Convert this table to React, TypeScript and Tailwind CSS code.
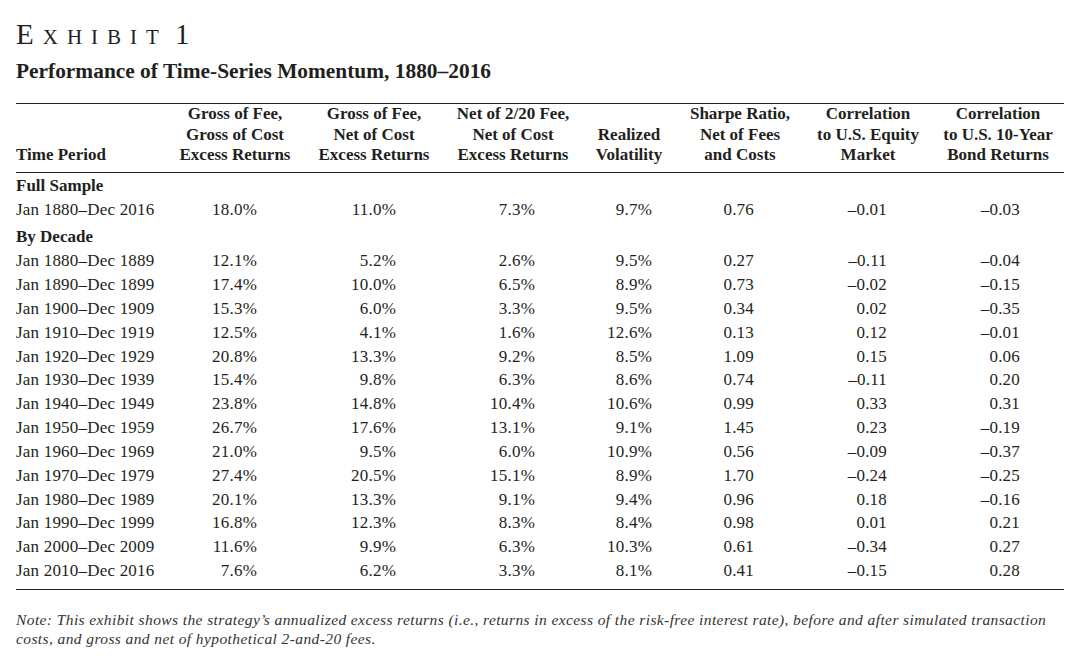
const cols = [
  { w: "w-[150px]", pr: "" },
  { w: "w-[138px]", pr: "pr-[47px]" },
  { w: "w-[140px]", pr: "pr-[48px]" },
  { w: "w-[138px]", pr: "pr-[47px]" },
  { w: "w-[94px]", pr: "pr-[24px]" },
  { w: "w-[128px]", pr: "pr-[50px]" },
  { w: "w-[128px]", pr: "pr-[45px]" },
  { w: "w-[132px]", pr: "pr-[44px]" },
];

const headers = [
  ["Time Period"],
  ["Gross of Fee,", "Gross of Cost", "Excess Returns"],
  ["Gross of Fee,", "Net of Cost", "Excess Returns"],
  ["Net of 2/20 Fee,", "Net of Cost", "Excess Returns"],
  ["Realized", "Volatility"],
  ["Sharpe Ratio,", "Net of Fees", "and Costs"],
  ["Correlation", "to U.S. Equity", "Market"],
  ["Correlation", "to U.S. 10-Year", "Bond Returns"],
];

const fullSample = ["Jan 1880–Dec 2016", "18.0%", "11.0%", "7.3%", "9.7%", "0.76", "–0.01", "–0.03"];

const decades = [
  ["Jan 1880–Dec 1889", "12.1%", "5.2%", "2.6%", "9.5%", "0.27", "–0.11", "–0.04"],
  ["Jan 1890–Dec 1899", "17.4%", "10.0%", "6.5%", "8.9%", "0.73", "–0.02", "–0.15"],
  ["Jan 1900–Dec 1909", "15.3%", "6.0%", "3.3%", "9.5%", "0.34", "0.02", "–0.35"],
  ["Jan 1910–Dec 1919", "12.5%", "4.1%", "1.6%", "12.6%", "0.13", "0.12", "–0.01"],
  ["Jan 1920–Dec 1929", "20.8%", "13.3%", "9.2%", "8.5%", "1.09", "0.15", "0.06"],
  ["Jan 1930–Dec 1939", "15.4%", "9.8%", "6.3%", "8.6%", "0.74", "–0.11", "0.20"],
  ["Jan 1940–Dec 1949", "23.8%", "14.8%", "10.4%", "10.6%", "0.99", "0.33", "0.31"],
  ["Jan 1950–Dec 1959", "26.7%", "17.6%", "13.1%", "9.1%", "1.45", "0.23", "–0.19"],
  ["Jan 1960–Dec 1969", "21.0%", "9.5%", "6.0%", "10.9%", "0.56", "–0.09", "–0.37"],
  ["Jan 1970–Dec 1979", "27.4%", "20.5%", "15.1%", "8.9%", "1.70", "–0.24", "–0.25"],
  ["Jan 1980–Dec 1989", "20.1%", "13.3%", "9.1%", "9.4%", "0.96", "0.18", "–0.16"],
  ["Jan 1990–Dec 1999", "16.8%", "12.3%", "8.3%", "8.4%", "0.98", "0.01", "0.21"],
  ["Jan 2000–Dec 2009", "11.6%", "9.9%", "6.3%", "10.3%", "0.61", "–0.34", "0.27"],
  ["Jan 2010–Dec 2016", "7.6%", "6.2%", "3.3%", "8.1%", "0.41", "–0.15", "0.28"],
];

const DataRow = ({ row }: { row: string[] }) => (
  <div className="flex h-[23.85px] items-center">
    {row.map((v, i) => (
      <div
        key={i}
        className={`${cols[i].w} ${i === 0 ? "text-left" : `text-right ${cols[i].pr}`} whitespace-nowrap`}
      >
        {v}
      </div>
    ))}
  </div>
);

export default function App() {
  return (
    <div className="w-[1080px] h-[660px] bg-white text-[#231f20] font-['Liberation_Serif',serif] px-4 pt-[19px]">
      <h1 className="leading-[30px] tracking-[9px] whitespace-nowrap">
        <span className="text-[29px]">E</span>
        <span className="text-[21px]">XHIBIT</span>
        <span className="text-[29px] ml-[7px]">1</span>
      </h1>
      <h2 className="mt-[5px] text-[21.4px] font-bold leading-[24px] whitespace-nowrap">
        Performance of Time-Series Momentum, 1880–2016
      </h2>

      <div className="mt-[20px] w-[1048px] border-t-[1.5px] border-[#231f20] text-[17px] tracking-[0.2px]">
        <div className="flex items-end pt-0 pb-[6px] border-b-[1.5px] border-[#231f20] font-bold leading-[20.5px] tracking-normal">
          {headers.map((h, i) => (
            <div key={i} className={`${cols[i].w} ${i === 0 ? "text-left" : "text-center"} whitespace-nowrap`}>
              {h.map((line, j) => (
                <div key={j}>{line}</div>
              ))}
            </div>
          ))}
        </div>

        <div className="pt-[1px] pb-[6px] border-b-[1.5px] border-[#231f20]">
          <div className="h-[23.85px] flex items-center font-bold tracking-normal">Full Sample</div>
          <DataRow row={fullSample} />
          <div className="h-[23.85px] mt-[4px] flex items-center font-bold tracking-normal">By Decade</div>
          {decades.map((r) => (
            <DataRow key={r[0]} row={r} />
          ))}
        </div>
      </div>

      <p className="mt-[20px] w-[1048px] text-[15.5px] leading-[19px] italic tracking-[0.4px] text-[#333]">
        Note: This exhibit shows the strategy’s annualized excess returns (i.e., returns in excess of the risk-free interest rate), before and after simulated transaction costs, and gross and net of hypothetical 2-and-20 fees.
      </p>
    </div>
  );
}
